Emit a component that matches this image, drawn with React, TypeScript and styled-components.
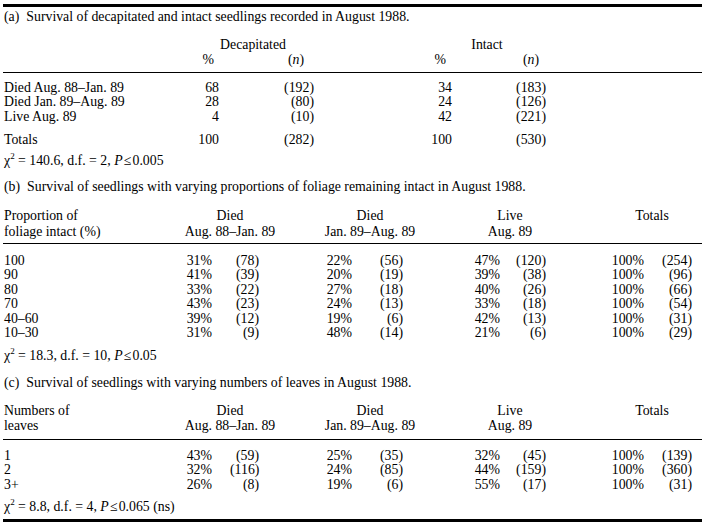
import React from "react";
import styled, { createGlobalStyle } from "styled-components";

const Global = createGlobalStyle`
  html, body { margin: 0; padding: 0; background: #fff; }
  body {
    font-family: "Liberation Serif", "Times New Roman", serif;
    color: #000;
  }
`;

const Page = styled.div`
  padding: 4px 0 0 3px;
`;

const Table = styled.div`
  width: 699px;
  border-top: 3px solid #000;
  border-bottom: 3px solid #000;
  font-size: 13.8px;
  line-height: 14.5px;
  padding-bottom: 5px;
`;

const Section = styled.section``;

const Caption = styled.div<{ $mt: number }>`
  margin-top: ${(p) => p.$mt}px;
  padding-left: 1px;
  white-space: nowrap;
`;

const Tag = styled.span`
  margin-right: 7px;
`;

const Grid = styled.div<{ $cols: string; $mt: number; $lh: number }>`
  display: grid;
  grid-template-columns: ${(p) => p.$cols};
  margin-top: ${(p) => p.$mt}px;
  line-height: ${(p) => p.$lh}px;
`;

const Stub = styled.div`
  grid-column: 1;
  padding-left: 1px;
  white-space: nowrap;
`;

const GroupHead = styled.div<{ $col: number }>`
  grid-column: ${(p) => p.$col} / span 2;
  text-align: center;
  white-space: nowrap;
`;

const SubHead = styled.div<{ $col: number; $pr: number }>`
  grid-column: ${(p) => p.$col};
  text-align: right;
  padding-right: ${(p) => p.$pr}px;
  white-space: nowrap;
`;

const Num = styled.div<{ $col: number; $pr: number }>`
  grid-column: ${(p) => p.$col};
  text-align: right;
  padding-right: ${(p) => p.$pr}px;
  white-space: nowrap;
`;

const Rule = styled.div<{ $mt: number }>`
  margin-top: ${(p) => p.$mt}px;
  height: 1px;
  background: #000;
`;

const Stat = styled.div<{ $mt: number }>`
  margin-top: ${(p) => p.$mt}px;
  padding-left: 1px;
  white-space: nowrap;
`;

const Chi = styled.span`
  sup {
    font-size: 9px;
    line-height: 0;
    vertical-align: 6px;
  }
`;

const Ital = styled.i`
  font-style: italic;
`;

type Col = { col: number; pr: number };

const A_COLS = "163px 87px 87px 57px 90px 90px 1fr";
const A_NUM: Col[] = [
  { col: 2, pr: 34 },
  { col: 3, pr: 26 },
  { col: 5, pr: 35 },
  { col: 6, pr: 31 },
];

const BC_COLS = "157px 70px 70px 70px 70px 70px 70px 22px 50px 50px";
const BC_NUM: Col[] = [
  { col: 2, pr: 18 },
  { col: 3, pr: 41 },
  { col: 4, pr: 18 },
  { col: 5, pr: 37 },
  { col: 6, pr: 10 },
  { col: 7, pr: 34 },
  { col: 9, pr: 8 },
  { col: 10, pr: 10 },
];
const BC_GROUPS = [
  { col: 2, top: "Died", bottom: "Aug. 88–Jan. 89" },
  { col: 4, top: "Died", bottom: "Jan. 89–Aug. 89" },
  { col: 6, top: "Live", bottom: "Aug. 89" },
  { col: 9, top: "Totals", bottom: "" },
];

const aRows = [
  ["Died Aug. 88–Jan. 89", "68", "(192)", "34", "(183)"],
  ["Died Jan. 89–Aug. 89", "28", "(80)", "24", "(126)"],
  ["Live Aug. 89", "4", "(10)", "42", "(221)"],
];
const aTotals = ["Totals", "100", "(282)", "100", "(530)"];

const bRows = [
  ["100", "31%", "(78)", "22%", "(56)", "47%", "(120)", "100%", "(254)"],
  ["90", "41%", "(39)", "20%", "(19)", "39%", "(38)", "100%", "(96)"],
  ["80", "33%", "(22)", "27%", "(18)", "40%", "(26)", "100%", "(66)"],
  ["70", "43%", "(23)", "24%", "(13)", "33%", "(18)", "100%", "(54)"],
  ["40–60", "39%", "(12)", "19%", "(6)", "42%", "(13)", "100%", "(31)"],
  ["10–30", "31%", "(9)", "48%", "(14)", "21%", "(6)", "100%", "(29)"],
];

const cRows = [
  ["1", "43%", "(59)", "25%", "(35)", "32%", "(45)", "100%", "(139)"],
  ["2", "32%", "(116)", "24%", "(85)", "44%", "(159)", "100%", "(360)"],
  ["3+", "26%", "(8)", "19%", "(6)", "55%", "(17)", "100%", "(31)"],
];

const Row: React.FC<{ cells: string[]; cols: Col[] }> = ({ cells, cols }) => (
  <>
    <Stub>{cells[0]}</Stub>
    {cells.slice(1).map((v, i) => (
      <Num key={i} $col={cols[i].col} $pr={cols[i].pr}>
        {v}
      </Num>
    ))}
  </>
);

const StatLine: React.FC<{ chi: string; df: string; p: string; extra?: string; mt: number }> = ({
  chi,
  df,
  p,
  extra,
  mt,
}) => (
  <Stat $mt={mt}>
    <Chi>
      χ<sup>2</sup>
    </Chi>{" "}
    = {chi}, d.f. = {df}, <Ital>P</Ital>
    {"\u200a≤\u200a"}
    {p}
    {extra ? ` ${extra}` : ""}
  </Stat>
);

const GroupedSection: React.FC<{
  tag: string;
  caption: string;
  stub: [string, string];
  rows: string[][];
  stat: { chi: string; df: string; p: string; extra?: string };
  gaps: { cap: number; head: number; rule: number; body: number; stat: number };
}> = ({ tag, caption, stub, rows, stat, gaps }) => (
  <Section>
    <Caption $mt={gaps.cap}>
      <Tag>{tag}</Tag>
      {caption}
    </Caption>
    <Grid $cols={BC_COLS} $mt={gaps.head} $lh={15.5}>
      <Stub>{stub[0]}</Stub>
      {BC_GROUPS.map((g) => (
        <GroupHead key={g.col} $col={g.col}>
          {g.top}
        </GroupHead>
      ))}
      <Stub>{stub[1]}</Stub>
      {BC_GROUPS.map((g) => (
        <GroupHead key={g.col} $col={g.col}>
          {g.bottom || "\u00a0"}
        </GroupHead>
      ))}
    </Grid>
    <Rule $mt={gaps.rule} />
    <Grid $cols={BC_COLS} $mt={gaps.body} $lh={14.5}>
      {rows.map((r) => (
        <Row key={r[0]} cells={r} cols={BC_NUM} />
      ))}
    </Grid>
    <StatLine {...stat} mt={gaps.stat} />
  </Section>
);

export default function App() {
  return (
    <>
      <Global />
      <Page>
        <Table>
          <Section>
            <Caption $mt={2.75}>
              <Tag>(a)</Tag>
              Survival of decapitated and intact seedlings recorded in August 1988.
            </Caption>
            <Grid $cols={A_COLS} $mt={12.25} $lh={15}>
              <GroupHead $col={2}>Decapitated</GroupHead>
              <GroupHead $col={5}>Intact</GroupHead>
              <SubHead $col={2} $pr={39}>%</SubHead>
              <SubHead $col={3} $pr={36}>
                (<Ital>n</Ital>)
              </SubHead>
              <SubHead $col={5} $pr={41}>%</SubHead>
              <SubHead $col={6} $pr={38}>
                (<Ital>n</Ital>)
              </SubHead>
            </Grid>
            <Rule $mt={5.5} />
            <Grid $cols={A_COLS} $mt={7.75} $lh={14.5}>
              {aRows.map((r) => (
                <Row key={r[0]} cells={r} cols={A_NUM} />
              ))}
            </Grid>
            <Grid $cols={A_COLS} $mt={8.5} $lh={14.5}>
              <Row cells={aTotals} cols={A_NUM} />
            </Grid>
            <StatLine chi="140.6" df="2" p="0.005" mt={6.5} />
          </Section>
          <GroupedSection
            tag="(b)"
            caption="Survival of seedlings with varying proportions of foliage remaining intact in August 1988."
            stub={["Proportion of", "foliage intact (%)"]}
            rows={bRows}
            stat={{ chi: "18.3", df: "10", p: "0.05" }}
            gaps={{ cap: 11.5, head: 13.75, rule: 4, body: 9.75, stat: 8 }}
          />
          <GroupedSection
            tag="(c)"
            caption="Survival of seedlings with varying numbers of leaves in August 1988."
            stub={["Numbers of", "leaves"]}
            rows={cRows}
            stat={{ chi: "8.8", df: "4", p: "0.065", extra: "(ns)" }}
            gaps={{ cap: 12.5, head: 12.5, rule: 5.25, body: 8.75, stat: 7.5 }}
          />
        </Table>
      </Page>
    </>
  );
}
